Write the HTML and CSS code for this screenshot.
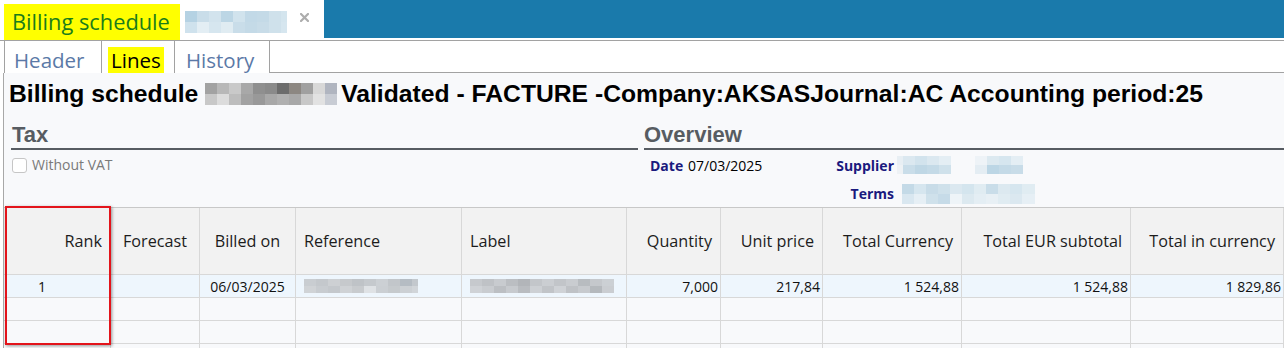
FILE: index.html
```html
<!DOCTYPE html>
<html lang="en">
<head>
<meta charset="utf-8">
<title>Billing schedule</title>
<link rel="stylesheet" href="styles.css">
</head>
<body>
<div class="topbar">
  <div class="doc-tab">
    <span class="doc-title">Billing schedule</span>
    <span class="mz mz-tab"></span>
    <svg class="close" width="9" height="9" viewBox="0 0 9 9"><path d="M1 1L8 8M8 1L1 8" stroke="#adadad" stroke-width="2.2" stroke-linecap="square"/></svg>
  </div>
  <div class="topfill"></div>
</div>
<div class="tabs">
  <div class="tab tab-header"><span class="tab-label">Header</span></div>
  <div class="tab tab-lines"><span class="tab-label hl">Lines</span></div>
  <div class="tab tab-history"><span class="tab-label">History</span></div>
  <div class="tabfill"></div>
</div>
<div class="content">
  <h1 class="page-title">Billing schedule <span class="mz mz-title"></span>Validated - FACTURE -Company:AKSASJournal:AC Accounting period:25</h1>
  <div class="sections">
    <section class="sec tax">
      <h2 class="sec-title">Tax</h2>
      <label class="chk"><span class="box"></span>Without VAT</label>
    </section>
    <section class="sec overview">
      <h2 class="sec-title">Overview</h2>
      <div class="ov-grid">
        <span class="lbl">Date</span>
        <span class="val">07/03/2025</span>
        <span class="lbl r">Supplier</span>
        <span class="val vals"><span class="mz mz-sup1"></span><span class="mz mz-sup2"></span></span>
        <span></span>
        <span></span>
        <span class="lbl r">Terms</span>
        <span class="val"><span class="mz mz-terms"></span></span>
      </div>
    </section>
  </div>
  <div class="grid">
    <div class="hc r">Rank</div>
    <div class="hc c">Forecast</div>
    <div class="hc c">Billed on</div>
    <div class="hc l">Reference</div>
    <div class="hc l">Label</div>
    <div class="hc r">Quantity</div>
    <div class="hc r">Unit price</div>
    <div class="hc r">Total Currency</div>
    <div class="hc r">Total EUR subtotal</div>
    <div class="hc r">Total in currency</div>

    <div class="dc sel rank">1</div>
    <div class="dc sel"></div>
    <div class="dc sel c">06/03/2025</div>
    <div class="dc sel pl"><span class="mz mz-ref"></span></div>
    <div class="dc sel pl"><span class="mz mz-label"></span></div>
    <div class="dc sel r">7,000</div>
    <div class="dc sel r">217,84</div>
    <div class="dc sel r">1 524,88</div>
    <div class="dc sel r">1 524,88</div>
    <div class="dc sel r">1 829,86</div>

    <div class="dc"></div><div class="dc"></div><div class="dc"></div><div class="dc"></div><div class="dc"></div>
    <div class="dc"></div><div class="dc"></div><div class="dc"></div><div class="dc"></div><div class="dc"></div>

    <div class="dc"></div><div class="dc"></div><div class="dc"></div><div class="dc"></div><div class="dc"></div>
    <div class="dc"></div><div class="dc"></div><div class="dc"></div><div class="dc"></div><div class="dc"></div>

    <div class="dc"></div><div class="dc"></div><div class="dc"></div><div class="dc"></div><div class="dc"></div>
    <div class="dc"></div><div class="dc"></div><div class="dc"></div><div class="dc"></div><div class="dc"></div>

    <div class="mark"></div>
  </div>
</div>
</body>
</html>
```
FILE: styles.css
```css
* { box-sizing: border-box; }
html, body { margin: 0; padding: 0; }
body {
  width: 1284px;
  height: 348px;
  overflow: hidden;
  background: #fff;
  font-family: "Open Sans", "Noto Sans", sans-serif;
  color: #000;
}

/* ---------- top bar ---------- */
.topbar { display: flex; height: 40px; }
.doc-tab { width: 324px; display: flex; align-items: flex-start; flex: none; }
.doc-title {
  margin: 4px 0 0 4px;
  width: 176px;
  height: 36px;
  padding: 0 0 0 8px;
  background: #ffff00;
  color: #1b7d1b;
  font-size: 21.8px;
  line-height: 36px;
  white-space: nowrap;
}
.mz-tab { margin: 11px 0 0 5px; width: 102px; height: 22px; }
.close { margin: 13px 0 0 13px; }
.topfill { flex: 1; height: 38px; background: #1a7aab; }

/* ---------- tabs ---------- */
.tabs {
  display: flex;
  height: 33px;
  border-top: 1px solid #a2a2a2;
  padding-left: 4px;
}
.tab {
  height: 32px;
  background: #fff;
  border-right: 1px solid #a2a2a2;
  display: flex;
  align-items: flex-end;
  font-size: 20.5px;
  color: #5b79a7;
}
.tab-header { width: 98px; border-left: 1px solid #a2a2a2; padding-left: 9px; }
.tab-lines { width: 73px; padding-left: 6px; }
.tab-history { width: 95px; padding-left: 11px; }
.tab-label { display: block; height: 26px; line-height: 26px; white-space: nowrap; }
.hl { background: #ffff00; color: #000; padding: 0 3px; }
.tabfill { flex: 1; height: 32px; background: #fff; border-bottom: 1px solid #a2a2a2; }

/* ---------- content ---------- */
.content {
  margin-left: 3px;
  border-left: 1px solid #a8a8a8;
  background: #f8f9fb;
  height: 275px;
  overflow: hidden;
}
.page-title {
  margin: 0;
  padding: 7px 0 0 5px;
  font: bold 24.7px/28px "Liberation Sans", Arial, sans-serif;
  white-space: nowrap;
  color: #000;
}
.mz-title { width: 132px; height: 22px; margin-right: 4px; vertical-align: -3px; }

.sections { display: flex; gap: 6px; margin: 14px 0 0 7px; height: 85px; }
.sec.tax { width: 627px; flex: none; }
.sec.overview { flex: 1; }
.sec-title {
  margin: 0;
  height: 28px;
  font: bold 22px/26px "Liberation Sans", Arial, sans-serif;
  color: #575c62;
  border-bottom: 2px solid #575c62;
}
.tax .sec-title { padding-left: 1px; }

.chk {
  display: flex;
  align-items: center;
  gap: 5px;
  margin: 7px 0 0 1px;
  font-size: 14px;
  line-height: 16px;
  color: #7a7a7a;
}
.box {
  width: 15px;
  height: 15px;
  border: 1px solid #c6c6c6;
  border-radius: 3px;
  background: #fff;
}

.ov-grid {
  display: grid;
  grid-template-columns: 38px 135px 71px 1fr;
  grid-auto-rows: 28px;
  align-items: center;
  padding: 1px 0 0 6px;
  font-size: 14px;
}
.lbl { font-weight: 700; color: #1a1a7e; }
.lbl.r { text-align: right; }
.val { color: #000; }
.vals { display: flex; align-items: center; }
.mz-sup1 { width: 54px; height: 18px; margin-left: 3px; }
.mz-sup2 { width: 48px; height: 18px; margin-left: 24px; }
.mz-terms { width: 133px; height: 20px; margin-left: 8px; vertical-align: middle; }

/* ---------- grid ---------- */
.grid {
  position: relative;
  display: grid;
  grid-template-columns: 107px 89px 96px 166px 165px 94px 102px 139px 169px 153px;
  border-top: 1px solid #c8c8c8;
}
.hc, .dc {
  border-right: 1px solid #d8d8d8;
  border-bottom: 1px solid #d8d8d8;
  display: flex;
  align-items: center;
  white-space: nowrap;
  overflow: hidden;
}
.hc {
  height: 67px;
  background: #f2f2f2;
  font-size: 16.2px;
  padding: 0 8px;
  color: #1c1c1c;
}
.dc {
  height: 23px;
  font-size: 14px;
  padding: 0 2px;
  color: #111;
}
.dc.sel { background: #eef6fd; }
.r { justify-content: flex-end; }
.c { justify-content: center; }
.l { justify-content: flex-start; }
.dc.rank { padding-left: 34px; }
.dc.pl { padding-left: 8px; }
.mz-ref { width: 114px; height: 14px; }
.mz-label { width: 144px; height: 14px; }

.mark {
  position: absolute;
  left: 1px;
  top: -2px;
  width: 106px;
  height: 139px;
  border: 2px solid #e3141b;
  box-shadow: 1px 1px 3px rgba(0, 0, 0, 0.4);
  pointer-events: none;
}

/* ---------- mosaics (blurred data) ---------- */
.mz {
  display: inline-block;
  background-repeat: no-repeat;
  background-size: 100% 50%;
  background-position: left top, left bottom;
}
.mz-tab {
  background-image:
    linear-gradient(90deg, #b5d2e3 0 12px, #c9dde9 12px 24px, #d2e3ed 24px 36px, #bcd6e5 36px 48px, #d1e3ed 48px 60px, #c2d9e7 60px 72px, #c4dae7 72px 84px, #cfe1eb 84px 96px, #d4e5ee 96px),
    linear-gradient(90deg, #cfe2ed 0 12px, #e3eef4 12px 24px, #d6e6ef 24px 36px, #e0ecf2 36px 48px, #c9dde9 48px 60px, #c4dae7 60px 72px, #c8dce8 72px 84px, #cfe1eb 84px 96px, #d6e6ef 96px);
}
.mz-title {
  background-image:
    linear-gradient(90deg, #a2a2a2 0 12px, #b8b8b8 12px 24px, #c9c9c9 24px 36px, #a8a8a8 36px 48px, #8f8f8f 48px 60px, #8a8a8a 60px 72px, #6c6c6c 72px 84px, #8c8782 84px 96px, #a0a0a0 96px 108px, #d8d8d8 108px 120px, #b0b5c0 120px),
    linear-gradient(90deg, #c8c8c8 0 12px, #dcdcdc 12px 24px, #bdbdbd 24px 36px, #a2a2a2 36px 48px, #999 48px 60px, #a8a8a8 60px 72px, #b0b0b0 72px 84px, #a8a8a8 84px 96px, #c8c8c8 96px 108px, #e2e2e2 108px 120px, #c8ccd4 120px);
}
.mz-ref {
  background-image:
    linear-gradient(90deg, #c9cdd1 0 12px, #c4c8cc 12px 24px, #cdd0d3 24px 36px, #c6c9cc 36px 48px, #bfc3c7 48px 60px, #c5c9cd 60px 72px, #ccd0d4 72px 84px, #c2c6ca 84px 96px, #b5bcc3 96px 108px, #c3c8cd 108px),
    linear-gradient(90deg, #d0d3d6 0 12px, #c8ccd0 12px 24px, #c4c8cc 24px 36px, #cfd2d5 36px 48px, #c8cbce 48px 60px, #dfe2e5 60px 72px, #cbcfd3 72px 84px, #c6cacd 84px 96px, #ccd0d4 96px 108px, #d1d5d9 108px);
}
.mz-label {
  background-image:
    linear-gradient(90deg, #c6c9cd 0 12px, #bfc2c6 12px 24px, #c8cbcf 24px 36px, #bbbec2 36px 48px, #b2b5b9 48px 60px, #c3c6ca 60px 72px, #cbced2 72px 84px, #c2c5c9 84px 96px, #c9ccd0 96px 108px, #b8bcc0 108px 120px, #c5c8cc 120px 132px, #ccd0d4 132px),
    linear-gradient(90deg, #cfd2d6 0 12px, #c9ccd0 12px 24px, #bcbfc3 24px 36px, #c7cace 36px 48px, #b9bcc0 48px 60px, #cdd0d4 60px 72px, #c1c4c8 72px 84px, #cfd2d6 84px 96px, #bfc2c6 96px 108px, #c7cace 108px 120px, #b5b9bd 120px 132px, #cacdd1 132px);
}
.mz-sup1 {
  background-image:
    linear-gradient(90deg, #e8eff4 0 6px, #dbe8f0 6px 18px, #d2e3ed 18px 30px, #dbe8f0 30px 42px, #e4eef4 42px),
    linear-gradient(90deg, #eef2f5 0 6px, #c9dde9 6px 18px, #bfd7e5 18px 30px, #c4dae7 30px 42px, #cfe1eb 42px);
}
.mz-sup2 {
  background-image:
    linear-gradient(90deg, #eef3f7 0 12px, #dce9f0 12px 24px, #d6e6ef 24px 36px, #e4eef4 36px),
    linear-gradient(90deg, #e4edf3 0 12px, #bcd6e5 12px 24px, #c4dae7 24px 36px, #c8dce8 36px);
}
.mz-terms {
  display: inline-block;
  background-image:
    linear-gradient(90deg, #c4dae7 0 12px, #d6e6ef 12px 24px, #c8dce8 24px 36px, #cfe1eb 36px 48px, #dbe8f0 48px 60px, #d4e5ee 60px 72px, #e0ecf2 72px 84px, #c9dde9 84px 96px, #dce9f0 96px 108px, #d6e6ef 108px 120px, #e0ecf2 120px),
    linear-gradient(90deg, #d9e7f0 0 12px, #e6eff5 12px 24px, #cfe1eb 24px 36px, #c6dbe8 36px 48px, #eef4f8 48px 60px, #dce9f0 60px 72px, #e4eef4 72px 84px, #e8f0f5 84px 96px, #e0ecf2 96px 108px, #dbe8f0 108px 120px, #e6eff5 120px);
}
```
